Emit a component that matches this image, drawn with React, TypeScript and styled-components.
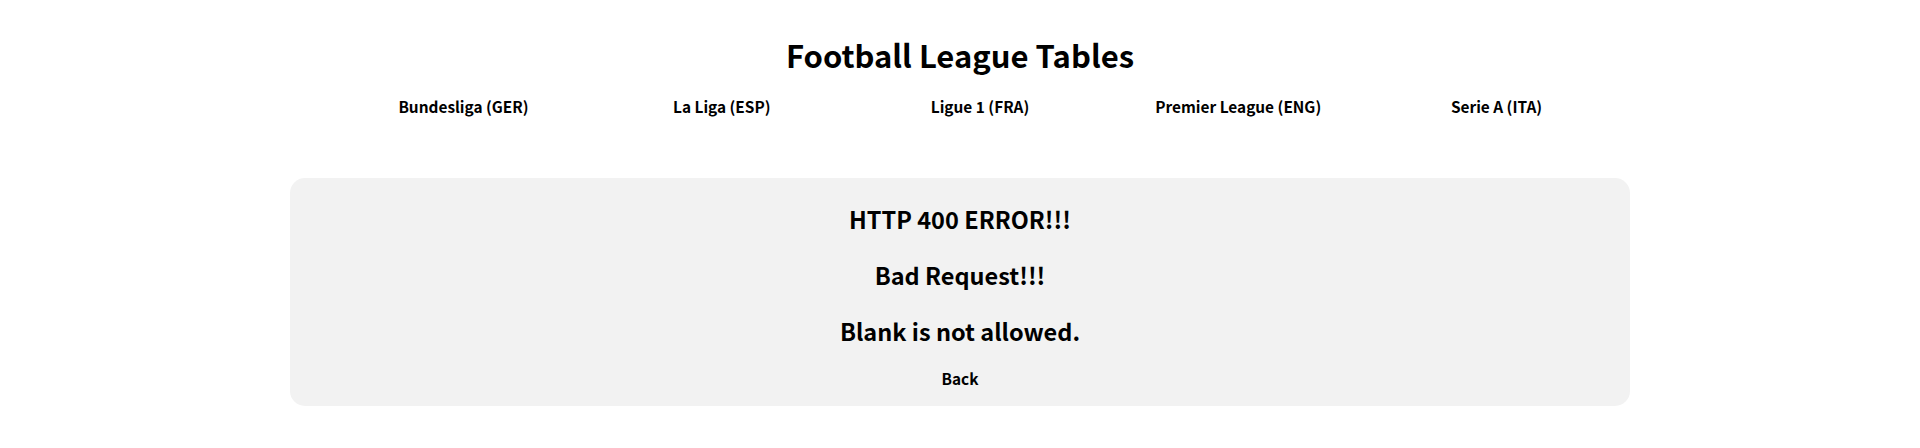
import React from "react";
import styled, { createGlobalStyle } from "styled-components";

const Global = createGlobalStyle`
  html, body {
    margin: 0;
    padding: 0;
    background: #ffffff;
  }
  body {
    font-family: "Noto Sans CJK KR", "Noto Sans", sans-serif;
    color: #000000;
  }
`;

const Page = styled.div`
  display: flex;
  flex-direction: column;
  align-items: center;
  padding-top: 35px;
`;

const Title = styled.h1`
  margin: 0;
  font-size: 31px;
  line-height: 40px;
  font-weight: 700;
  text-align: center;
`;

const Nav = styled.nav`
  width: 1340px;
  margin-top: 21px;
  padding-left: 40px;
  box-sizing: border-box;
  display: flex;
  justify-content: center;
`;

const NavList = styled.ul`
  list-style: none;
  margin: 0;
  padding: 0;
  display: grid;
  grid-template-columns: repeat(5, 258.25px);
`;

const NavItem = styled.li`
  text-align: center;
  font-size: 15.4px;
  line-height: 20px;
  font-weight: 700;
`;

const NavLink = styled.a`
  color: #000000;
  text-decoration: none;
  cursor: pointer;
`;

const ErrorBox = styled.section`
  width: 1340px;
  box-sizing: border-box;
  margin-top: 62px;
  padding: 26px 0 18px;
  background: #f2f2f2;
  border-radius: 15px;
  display: flex;
  flex-direction: column;
  align-items: center;
  gap: 26px;
`;

const Message = styled.h2`
  margin: 0;
  font-size: 23.5px;
  line-height: 30px;
  font-weight: 700;
  text-align: center;
`;

const BackLink = styled.a`
  margin-top: -4px;
  font-size: 15.4px;
  line-height: 20px;
  font-weight: 700;
  color: #000000;
  text-decoration: none;
  cursor: pointer;
`;

const leagues = [
  "Bundesliga (GER)",
  "La Liga (ESP)",
  "Ligue 1 (FRA)",
  "Premier League (ENG)",
  "Serie A (ITA)",
];

export default function App() {
  return (
    <>
      <Global />
      <Page>
        <Title>Football League Tables</Title>
        <Nav>
          <NavList>
            {leagues.map((l) => (
              <NavItem key={l}>
                <NavLink>{l}</NavLink>
              </NavItem>
            ))}
          </NavList>
        </Nav>
        <ErrorBox>
          <Message>HTTP 400 ERROR!!!</Message>
          <Message>Bad Request!!!</Message>
          <Message>Blank is not allowed.</Message>
          <BackLink>Back</BackLink>
        </ErrorBox>
      </Page>
    </>
  );
}
